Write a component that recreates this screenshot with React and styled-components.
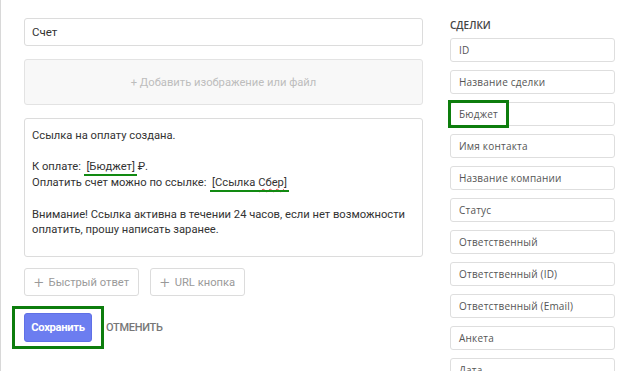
import React from 'react';
import styled, { createGlobalStyle } from 'styled-components';

const fields = [
  'ID',
  'Название сделки',
  'Бюджет',
  'Имя контакта',
  'Название компании',
  'Статус',
  'Ответственный',
  'Ответственный (ID)',
  'Ответственный (Email)',
  'Анкета',
  'Дата',
];

const App = () => {
  return (
    <>
      <GlobalStyle />
      <Page>
        <Editor>
          <TitleInput>Счет</TitleInput>
          <Upload>+ Добавить изображение или файл</Upload>
          <MessageBox>
            <p>Ссылка на оплату создана.</p>
            <p>&nbsp;</p>
            <p>
              К оплате:&nbsp; <Token>[Бюджет]</Token> ₽.
            </p>
            <p>
              Оплатить счет можно по ссылке:&nbsp;{' '}
              <Token>
                [Ссылка <Typo>Сбер</Typo>]
              </Token>
            </p>
            <p>&nbsp;</p>
            <p>
              Внимание! Ссылка активна в течении 24 часов, если нет возможности
              оплатить, прошу написать заранее.
            </p>
          </MessageBox>
          <ExtraRow>
            <GhostButton>
              <Plus>+</Plus> Быстрый ответ
            </GhostButton>
            <GhostButton>
              <Plus>+</Plus> URL кнопка
            </GhostButton>
          </ExtraRow>
          <Actions>
            <Marked>
              <SaveButton>Сохранить</SaveButton>
            </Marked>
            <CancelLink>Отменить</CancelLink>
          </Actions>
        </Editor>
        <Sidebar>
          <SideTitle>Сделки</SideTitle>
          <FieldList>
            {fields.map(f => (
              <Field key={f}>
                {f}
                {f === 'Бюджет' && <FieldMark />}
              </Field>
            ))}
          </FieldList>
        </Sidebar>
      </Page>
    </>
  );
};

export default App;

//styles

const GlobalStyle = createGlobalStyle`
  body {
    margin: 0;
    background: #fff;
    font-family: Roboto, "Noto Sans", sans-serif;
    color: #333;
  }
  p { margin: 0; }
`;

const Page = styled.div`
  display: flex;
  gap: 27px;
  height: 371px;
  overflow: hidden;
  box-sizing: border-box;
  border-left: 1px solid #d8d8d8;
  padding: 18px 7px 0 23px;
`;

const Editor = styled.div`
  width: 399px;
  display: flex;
  flex-direction: column;
`;

const TitleInput = styled.div`
  height: 28px;
  box-sizing: border-box;
  border: 1px solid #dcdcdc;
  border-radius: 3px;
  padding: 0 7px;
  display: flex;
  align-items: center;
  font-size: 11.5px;
  color: #333;
`;

const Upload = styled.div`
  margin-top: 13px;
  height: 46px;
  box-sizing: border-box;
  border: 1px solid #e3e3e3;
  border-radius: 3px;
  background: #f8f8f8;
  display: flex;
  align-items: center;
  justify-content: center;
  font-size: 11.2px;
  color: #bdbdbd;
`;

const MessageBox = styled.div`
  margin-top: 13px;
  height: 139px;
  box-sizing: border-box;
  border: 1px solid #dcdcdc;
  border-radius: 3px;
  padding: 9px 7px;
  font-size: 11.2px;
  line-height: 15.7px;
  color: #333;
`;

const Token = styled.span`
  position: relative;
  &::after {
    content: '';
    position: absolute;
    left: -2px;
    right: -2px;
    bottom: -3px;
    height: 2px;
    background: #128a12;
  }
`;

const Typo = styled.span`
  text-decoration: underline wavy #e04040;
  text-decoration-thickness: 1px;
  text-underline-offset: 2px;
`;

const ExtraRow = styled.div`
  margin-top: 11px;
  display: flex;
  gap: 11px;
`;

const GhostButton = styled.div`
  height: 28px;
  box-sizing: border-box;
  border: 1px solid #dcdcdc;
  border-radius: 3px;
  padding: 0 9px;
  display: flex;
  align-items: center;
  gap: 5px;
  font-size: 11.2px;
  color: #9a9a9a;
`;

const Plus = styled.span`
  font-size: 17px;
  font-weight: 300;
  color: #999;
  line-height: 1;
`;

const Actions = styled.div`
  margin-top: 17px;
  display: flex;
  align-items: center;
  gap: 14px;
`;

const Marked = styled.div`
  position: relative;
  &::before {
    content: '';
    position: absolute;
    left: -12px;
    top: -7px;
    right: -12px;
    bottom: -7px;
    border: 3px solid #0d7d0d;
  }
`;

const SaveButton = styled.div`
  width: 68px;
  height: 29px;
  box-sizing: border-box;
  border-radius: 3px;
  background: #6c7df0;
  border: 1px solid #5f70e6;
  color: #fff;
  font-size: 11.2px;
  font-weight: 700;
  letter-spacing: -0.3px;
  display: flex;
  align-items: center;
  justify-content: center;
`;

const CancelLink = styled.div`
  font-size: 11px;
  font-weight: 500;
  color: #777;
  text-transform: uppercase;
  letter-spacing: -0.3px;
`;

const Sidebar = styled.div`
  width: 165px;
  padding-top: 1px;
  display: flex;
  flex-direction: column;
  font-family: "Open Sans", "Noto Sans", sans-serif;
`;

const SideTitle = styled.div`
  font-size: 10px;
  font-weight: 600;
  color: #444;
  text-transform: uppercase;
  line-height: 12px;
  margin-bottom: 7px;
`;

const FieldList = styled.div`
  display: flex;
  flex-direction: column;
  gap: 8px;
`;

const Field = styled.div`
  position: relative;
  height: 24px;
  flex-shrink: 0;
  box-sizing: border-box;
  border: 1px solid #dedede;
  border-radius: 3px;
  padding: 0 8px;
  display: flex;
  align-items: center;
  font-size: 10px;
  color: #555;
  letter-spacing: 0.2px;
`;

const FieldMark = styled.span`
  position: absolute;
  left: -3px;
  top: -3px;
  width: 61px;
  height: 28px;
  box-sizing: border-box;
  border: 3px solid #0d7d0d;
`;
